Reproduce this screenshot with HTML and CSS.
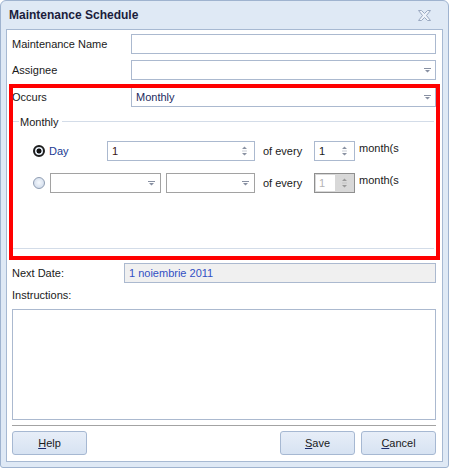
FILE: index.html
```html
<!DOCTYPE html>
<html>
<head>
<meta charset="utf-8">
<link rel="stylesheet" href="styles.css">
</head>
<body>
<div class="window">
  <div class="titlebar">
    <span class="title">Maintenance Schedule</span>
    <svg class="close" width="13" height="11" viewBox="0 0 13 11"><path d="M0.5 0.5H3.5L6.5 3.5L9.5 0.5H12.5L8.5 5.5L12.5 10.5H9.5L6.5 7.5L3.5 10.5H0.5L4.5 5.5Z" fill="#eef3fa" stroke="#9aa9c1"/></svg>
  </div>
  <div class="panel">
    <div class="row r1">
      <span class="lbl">Maintenance Name</span>
      <div class="field"></div>
    </div>
    <div class="row r2">
      <span class="lbl">Assignee</span>
      <div class="field combo"><span class="val"></span><svg class="arrow" width="7" height="5" viewBox="0 0 7 5"><path d="M0 0h7v1H0z M1 2h5L3.5 4.5z" fill="#8890a2"/></svg></div>
    </div>
    <div class="occurs-wrap">
      <div class="row">
        <span class="lbl">Occurs</span>
        <div class="field combo"><span class="val navy">Monthly</span><svg class="arrow" width="7" height="5" viewBox="0 0 7 5"><path d="M0 0h7v1H0z M1 2h5L3.5 4.5z" fill="#8890a2"/></svg></div>
      </div>
      <div class="group">
        <div class="group-head"><span>Monthly</span></div>
        <div class="grow g1">
          <span class="radio on"></span>
          <span class="daylbl">Day</span>
          <div class="field spin wide"><span class="val maroon">1</span><svg class="spinbtn" width="7" height="12" viewBox="0 0 7 12"><path d="M1 4h5L3.5 1.5z M1 8h5L3.5 10.5z" fill="#8a92a2"/><path d="M1 6h5" stroke="#c9cdd5"/></svg></div>
          <span class="of">of every</span>
          <div class="field spin small"><span class="val">1</span><svg class="spinbtn" width="7" height="12" viewBox="0 0 7 12"><path d="M1 4h5L3.5 1.5z M1 8h5L3.5 10.5z" fill="#8a92a2"/><path d="M1 6h5" stroke="#c9cdd5"/></svg></div>
          <span class="months">month(s</span>
        </div>
        <div class="grow g2">
          <span class="radio"></span>
          <div class="field combo grey c1"><span class="val"></span><svg class="arrow" width="7" height="5" viewBox="0 0 7 5"><path d="M0 0h7v1H0z M1 2h5L3.5 4.5z" fill="#8890a2"/></svg></div>
          <div class="field combo grey c2"><span class="val"></span><svg class="arrow" width="7" height="5" viewBox="0 0 7 5"><path d="M0 0h7v1H0z M1 2h5L3.5 4.5z" fill="#8890a2"/></svg></div>
          <span class="of">of every</span>
          <div class="field spin small dis"><span class="txt">1</span><svg class="spinbtn" width="7" height="12" viewBox="0 0 7 12"><path d="M1 4h5L3.5 1.5z M1 8h5L3.5 10.5z" fill="#9a9a9a"/><path d="M1 6h5" stroke="#c4c4c4"/></svg></div>
          <span class="months">month(s</span>
        </div>
      </div>
    </div>
    <div class="row r-next">
      <span class="lbl lbl-next">Next Date:</span>
      <div class="field ro">1 noiembrie 2011</div>
    </div>
    <div class="instr">Instructions:</div>
    <div class="textarea"></div>
    <div class="sep"></div>
    <div class="buttons">
      <button class="btn"><u>H</u>elp</button>
      <button class="btn save"><u>S</u>ave</button>
      <button class="btn"><u>C</u>ancel</button>
    </div>
  </div>
</div>
</body>
</html>
```
FILE: styles.css
```css
* { box-sizing: border-box; }
html, body { margin: 0; padding: 0; }
body {
  width: 449px;
  height: 468px;
  overflow: hidden;
  font-family: "Liberation Sans", Arial, sans-serif;
  font-size: 11px;
  color: #1a1a1a;
  background: #ffffff;
}
.window {
  width: 449px;
  height: 468px;
  border: 1px solid #9fb3cf;
  border-radius: 6px 6px 3px 3px;
  background: #dfe9f5;
  display: flex;
  flex-direction: column;
}
.titlebar {
  height: 28px;
  flex: none;
  display: flex;
  align-items: center;
  justify-content: space-between;
  padding: 0 17px 0 8px;
}
.title {
  font-weight: bold;
  font-size: 12px;
  color: #1b1d3c;
}
.close { display: block; }
.panel {
  flex: 1;
  margin: 0 5px 5px;
  border: 1px solid #a7b9d2;
  background: #ffffff;
  padding: 0 6px 0 5px;
  display: flex;
  flex-direction: column;
}
.row {
  display: flex;
  align-items: center;
  height: 20px;
  flex: none;
}
.lbl { width: 119px; flex: none; }
.field {
  flex: 1;
  height: 20px;
  border: 1px solid #abb9cf;
  background: #ffffff;
  display: flex;
  align-items: center;
}
.field .val { flex: 1; padding-left: 4px; }
.navy { color: #1c2a5e; }
.maroon { color: #3a1414; }
.arrow { display: block; margin-right: 4px; flex: none; }
.r1 { margin-top: 4px; }
.r2 { margin-top: 6px; }
.occurs-wrap {
  margin-top: 7px;
  position: relative;
}
.occurs-wrap::after {
  content: "";
  position: absolute;
  left: -3px;
  top: -3px;
  right: -4px;
  bottom: -11px;
  border: 4px solid #ff0000;
  pointer-events: none;
}
.group {
  margin: 8px 2px 0 1px;
  border-bottom: 1px solid #d3dce8;
  padding-bottom: 55px;
}
.group-head {
  height: 13px;
  display: flex;
  align-items: center;
  color: #1a1a1a;
}
.group-head::before {
  content: "";
  width: 6px;
  height: 1px;
  background: #d3dce8;
  margin-right: 1px;
}
.group-head::after {
  content: "";
  flex: 1;
  height: 1px;
  background: #d3dce8;
  margin-left: 3px;
}
.grow {
  display: flex;
  align-items: center;
  height: 20px;
  padding-left: 20px;
}
.g1 { margin-top: 13px; }
.g2 { margin-top: 12px; }
.radio {
  width: 12px;
  height: 12px;
  border-radius: 50%;
  flex: none;
  border: 1px solid #8f9db2;
  background: radial-gradient(circle at 50% 45%, #f6f9fd 0, #d6e0ee 70%);
}
.radio.on {
  border: 2px solid #1e1e1e;
  background: radial-gradient(circle, #111111 0 2.2px, #e6edf6 2.8px);
}
.daylbl {
  width: 58px;
  margin-left: 4px;
  color: #203a93;
  flex: none;
}
.spin { flex: none; }
.spin.wide { width: 148px; }
.spin.small { width: 41px; }
.spinbtn { display: block; margin-right: 6px; flex: none; }
.of {
  width: 51px;
  margin-left: 8px;
  flex: none;
}
.months {
  margin-left: 4px;
  align-self: flex-start;
  line-height: 13px;
  margin-top: 1px;
  white-space: nowrap;
}
.grow .radio + .c1 { margin-left: 5px; }
.c1 { width: 111px; flex: none; }
.c2 { width: 89px; flex: none; margin-left: 5px; }
.field.grey { border-color: #a2a2a2; }
.c1 .arrow, .c2 .arrow { margin-right: 5px; }
.spin.dis {
  background: #d8d8d8;
  border-color: #8f8f8f;
  padding: 1px;
}
.spin.dis .txt {
  width: 19px;
  height: 16px;
  background: #ffffff;
  color: #b4b4b4;
  padding-left: 3px;
  line-height: 16px;
  margin-right: auto;
}
.spin.dis .spinbtn { margin-right: 5px; }
.r-next { margin-top: 14px; }
.lbl-next { width: 112px; }
.field.ro {
  background: #f0f0f0;
  padding-left: 4px;
  color: #3350c4;
}
.instr {
  margin-top: 6px;
  height: 13px;
  line-height: 13px;
  flex: none;
}
.textarea {
  margin-top: 7px;
  height: 111px;
  border: 1px solid #abb9cf;
  flex: none;
}
.sep {
  margin-top: 5px;
  height: 1px;
  background: #a3a3a3;
  flex: none;
}
.buttons {
  margin-top: 5px;
  height: 24px;
  display: flex;
  gap: 6px;
  flex: none;
}
.btn {
  width: 75px;
  height: 24px;
  margin: 0;
  padding: 0;
  border: 1px solid #a6b8d2;
  border-radius: 3px;
  background: linear-gradient(#e7eef8, #d7e3f2);
  font-family: "Liberation Sans", Arial, sans-serif;
  font-size: 11px;
  color: #1a1a1a;
}
.btn u { text-decoration-color: #1a2a6a; }
.save { margin-left: auto; }
```
